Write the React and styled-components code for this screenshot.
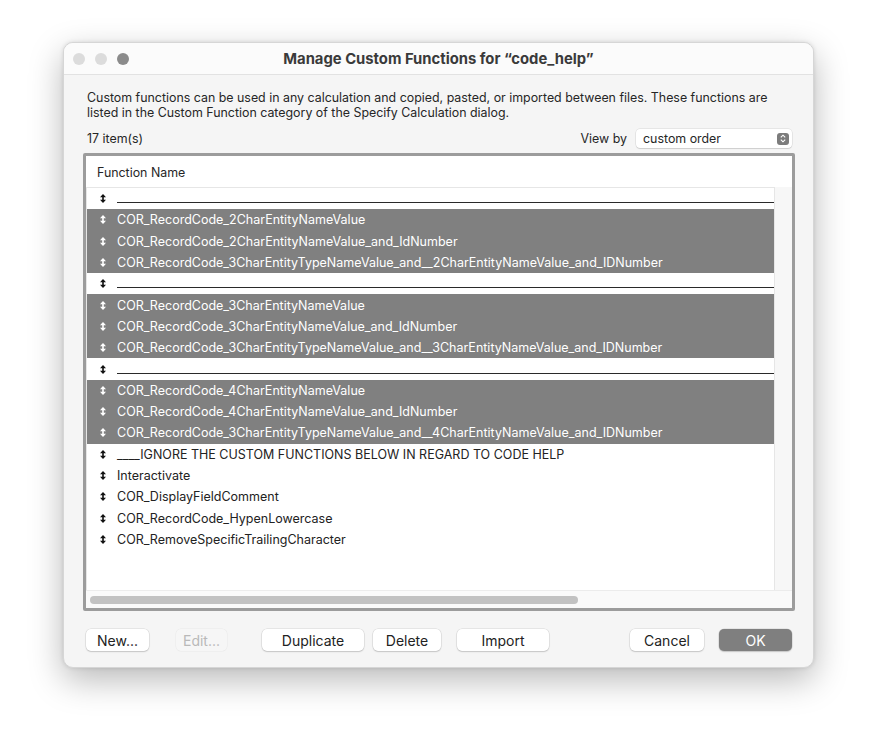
import styled, { createGlobalStyle } from "styled-components";

const rows = [
  { sep: true },
  { name: "COR_RecordCode_2CharEntityNameValue", sel: true },
  { name: "COR_RecordCode_2CharEntityNameValue_and_IdNumber", sel: true },
  { name: "COR_RecordCode_3CharEntityTypeNameValue_and__2CharEntityNameValue_and_IDNumber", sel: true },
  { sep: true },
  { name: "COR_RecordCode_3CharEntityNameValue", sel: true },
  { name: "COR_RecordCode_3CharEntityNameValue_and_IdNumber", sel: true },
  { name: "COR_RecordCode_3CharEntityTypeNameValue_and__3CharEntityNameValue_and_IDNumber", sel: true },
  { sep: true },
  { name: "COR_RecordCode_4CharEntityNameValue", sel: true },
  { name: "COR_RecordCode_4CharEntityNameValue_and_IdNumber", sel: true },
  { name: "COR_RecordCode_3CharEntityTypeNameValue_and__4CharEntityNameValue_and_IDNumber", sel: true },
  { name: "____IGNORE THE CUSTOM FUNCTIONS BELOW IN REGARD TO CODE HELP" },
  { name: "Interactivate" },
  { name: "COR_DisplayFieldComment" },
  { name: "COR_RecordCode_HypenLowercase" },
  { name: "COR_RemoveSpecificTrailingCharacter" },
];

const GlobalStyle = createGlobalStyle`
  body {
    margin: 0;
    background: #ffffff;
    font-family: Inter, "Liberation Sans", Arial, sans-serif;
  }
`;

const Page = styled.div`
  padding: 42px 0 0 63px;
  height: 750px;
  box-sizing: border-box;
`;

const Window = styled.div`
  width: 751px;
  height: 626px;
  border-radius: 10px;
  background: #f5f5f5;
  border: 1px solid #d6d6d6;
  box-sizing: border-box;
  box-shadow: 0 12px 34px rgba(0, 0, 0, 0.28), 0 0 4px rgba(0, 0, 0, 0.12);
  display: flex;
  flex-direction: column;
  overflow: hidden;
`;

const TitleBar = styled.div`
  height: 31px;
  flex-shrink: 0;
  background: #fbfbfb;
  border-bottom: 1px solid #e2e2e2;
  display: flex;
  align-items: center;
  position: relative;
`;

const Lights = styled.div`
  display: flex;
  gap: 10px;
  padding-left: 9px;
`;

const Light = styled.span`
  width: 12px;
  height: 12px;
  border-radius: 50%;
  background: ${(p) => (p.$dark ? "#8b8b8b" : "#dcdcdc")};
`;

const Title = styled.div`
  position: absolute;
  left: 0;
  right: 0;
  text-align: center;
  font-size: 14.8px;
  font-weight: 700;
  color: #3a3a3a;
  pointer-events: none;
`;

const Body = styled.div`
  flex: 1;
  display: flex;
  flex-direction: column;
  padding: 15px 18px 0 19px;
`;

const Description = styled.p`
  margin: 0 0 0 4px;
  font-size: 12.4px;
  line-height: 15px;
  color: #262626;
`;

const InfoRow = styled.div`
  display: flex;
  align-items: center;
  justify-content: space-between;
  margin: 9px 3px 5px 4px;
  font-size: 12.4px;
  color: #262626;
`;

const ViewBy = styled.div`
  display: flex;
  align-items: center;
  gap: 9px;
`;

const Select = styled.div`
  width: 156px;
  height: 19px;
  box-sizing: border-box;
  background: #ffffff;
  border-radius: 4px;
  box-shadow: 0 0 0 0.5px rgba(0, 0, 0, 0.12), 0 1px 1px rgba(0, 0, 0, 0.1);
  display: flex;
  align-items: center;
  justify-content: space-between;
  padding: 0 3px 0 7px;
  font-size: 12.4px;
`;

const Stepper = styled.span`
  width: 12px;
  height: 12px;
  border-radius: 3px;
  background: #7c7c7c;
  display: flex;
  align-items: center;
  justify-content: center;
`;

const Frame = styled.div`
  height: 458px;
  box-sizing: border-box;
  border: 3px solid #9c9c9c;
  border-radius: 2px;
  background: #f7f7f7;
  display: flex;
  flex-direction: column;
`;

const Header = styled.div`
  height: 31px;
  flex-shrink: 0;
  background: #ffffff;
  display: flex;
  align-items: center;
  padding: 2px 0 0 11px;
  box-sizing: border-box;
  font-size: 12.4px;
  color: #262626;
`;

const ListArea = styled.div`
  flex: 1;
  display: flex;
  min-height: 0;
`;

const List = styled.div`
  flex: 1;
  background: #ffffff;
  border: 1px solid #e6e6e6;
  border-bottom: none;
  overflow: hidden;
`;

const VTrack = styled.div`
  width: 17px;
  background: #f7f7f7;
`;

const Row = styled.div`
  height: 21.3px;
  display: flex;
  align-items: center;
  background: ${(p) => (p.$sel ? "#808080" : "transparent")};
  color: ${(p) => (p.$sel ? "#ffffff" : "#222222")};
  font-size: 12.5px;
  white-space: nowrap;
`;

const GripCell = styled.span`
  width: 29px;
  flex-shrink: 0;
  display: flex;
  justify-content: center;
  padding-left: 1px;
`;

const Name = styled.span`
  flex: 1;
`;

const SepLine = styled.span`
  flex: 1;
  align-self: stretch;
  border-bottom: 1.5px solid #2a2a2a;
  margin-bottom: 6px;
`;

const HTrack = styled.div`
  height: 17px;
  flex-shrink: 0;
  background: #fafafa;
  border-top: 1px solid #ececec;
  display: flex;
  align-items: center;
  padding-left: 4px;
`;

const HThumb = styled.div`
  width: 488px;
  height: 8px;
  border-radius: 4px;
  background: #c2c2c2;
`;

const Buttons = styled.div`
  display: flex;
  align-items: center;
  margin: 18px 3px 0 0;
`;

const Button = styled.button`
  height: 22px;
  width: ${(p) => p.$w}px;
  margin-left: ${(p) => p.$ml || 0}px;
  border: none;
  border-radius: 5px;
  font-family: Inter, "Liberation Sans", Arial, sans-serif;
  font-size: 14px;
  padding: 0;
  color: ${(p) => (p.$primary ? "#ffffff" : p.disabled ? "#b9b9b9" : "#222222")};
  box-shadow: ${(p) =>
    p.disabled
      ? "0 0 0 0.5px rgba(0,0,0,0.05)"
      : "0 0 0 0.5px rgba(0,0,0,0.12), 0 1px 1.5px rgba(0,0,0,0.15)"};
  background: ${(p) => (p.$primary ? "#7f7f7f" : p.disabled ? "#f6f6f6" : "#ffffff")};
`;

const Spacer = styled.div`
  flex: 1;
`;

function Grip({ light }) {
  const c = light ? "#ffffff" : "#111111";
  return (
    <svg width="6" height="9" viewBox="0 0 6 9">
      <path d="M3 0 L6 3.3 H0 Z" fill={c} />
      <path d="M3 9 L6 5.7 H0 Z" fill={c} />
      <rect x="2.2" y="3" width="1.6" height="3" fill={c} />
    </svg>
  );
}

export default function App() {
  return (
    <Page>
      <GlobalStyle />
      <Window>
        <TitleBar>
          <Lights>
            <Light />
            <Light />
            <Light $dark />
          </Lights>
          <Title>Manage Custom Functions for “code_help”</Title>
        </TitleBar>
        <Body>
          <Description>
            Custom functions can be used in any calculation and copied, pasted, or imported between files. These functions are
            listed in the Custom Function category of the Specify Calculation dialog.
          </Description>
          <InfoRow>
            <span>17 item(s)</span>
            <ViewBy>
              <span>View by</span>
              <Select>
                <span>custom order</span>
                <Stepper>
                  <svg width="6" height="9" viewBox="0 0 6 9">
                    <path d="M0.8 3.4 L3 1.2 L5.2 3.4" stroke="#fff" strokeWidth="1.1" fill="none" />
                    <path d="M0.8 5.6 L3 7.8 L5.2 5.6" stroke="#fff" strokeWidth="1.1" fill="none" />
                  </svg>
                </Stepper>
              </Select>
            </ViewBy>
          </InfoRow>
          <Frame>
            <Header>Function Name</Header>
            <ListArea>
              <List>
                {rows.map((r, i) => (
                  <Row key={i} $sel={r.sel}>
                    <GripCell>
                      <Grip light={r.sel} />
                    </GripCell>
                    {r.sep ? <SepLine /> : <Name>{r.name}</Name>}
                  </Row>
                ))}
              </List>
              <VTrack />
            </ListArea>
            <HTrack>
              <HThumb />
            </HTrack>
          </Frame>
          <Buttons>
            <Button $w={63} $ml={3}>New...</Button>
            <Button $w={51} $ml={27} disabled>Edit...</Button>
            <Button $w={102} $ml={35}>Duplicate</Button>
            <Button $w={68} $ml={9}>Delete</Button>
            <Button $w={92} $ml={16}>Import</Button>
            <Spacer />
            <Button $w={74}>Cancel</Button>
            <Button $w={73} $ml={15} $primary>OK</Button>
          </Buttons>
        </Body>
      </Window>
    </Page>
  );
}
